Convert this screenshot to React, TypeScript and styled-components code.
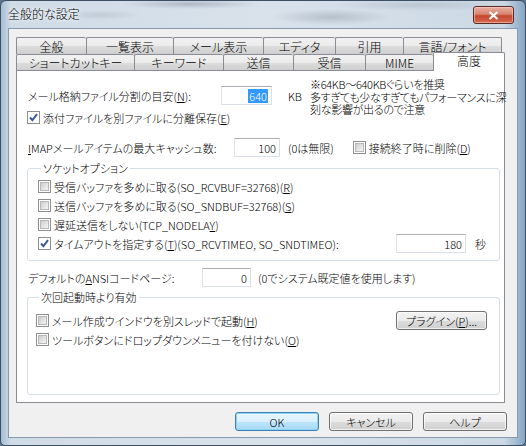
import React from "react";
import styled, { createGlobalStyle, css } from "styled-components";

const GlobalStyle = createGlobalStyle`
    html, body {
        margin: 0;
        padding: 0;
    }
    body {
        width: 526px;
        height: 446px;
        overflow: hidden;
        background: #5d7288;
        font-family: "Noto Sans CJK JP", sans-serif;
        font-size: 11px;
        font-weight: 300;
        font-feature-settings: "palt";
        color: #000;
    }
`;

const Window = styled.div`
    width: 526px;
    height: 446px;
    box-sizing: border-box;
    display: flex;
    flex-direction: column;
    border: 1px solid #3e4f61;
    border-radius: 6px 6px 5px 5px;
    overflow: hidden;
    background:
        radial-gradient(ellipse 60px 8px at 330px 16px, rgba(110, 120, 135, 0.3), transparent),
        radial-gradient(ellipse 70px 5px at 190px 3px, rgba(90, 100, 115, 0.3), transparent),
        radial-gradient(ellipse 40px 5px at 100px 14px, rgba(120, 130, 140, 0.2), transparent),
        radial-gradient(ellipse 90px 6px at 420px 4px, rgba(100, 110, 125, 0.2), transparent),
        linear-gradient(90deg, #a6bdd3 0px, #cfdbe6 10px, #d9e2eb 50%, #ccd9e5 96%, #86a5c4 100%);
`;

const TitleBar = styled.div`
    height: 27px;
    flex: none;
    display: flex;
    align-items: flex-start;
    justify-content: space-between;
    padding: 0 11px 0 7px;
`;

const TitleText = styled.span`
    margin-top: 6px;
    font-size: 12px;
    line-height: 14px;
    text-shadow: 0 0 6px #fff, 0 0 3px #fff;
`;

const CloseButton = styled.div`
    margin-top: 5px;
    width: 39px;
    height: 16px;
    border: 1px solid #5a2a26;
    border-radius: 3px;
    display: flex;
    align-items: center;
    justify-content: center;
    background: linear-gradient(180deg, #eab0a3 0%, #d98470 45%, #c4472f 55%, #d86a4f 100%);
    box-shadow: inset 0 0 0 1px rgba(255, 220, 210, 0.5);
`;

const Client = styled.div`
    flex: 1;
    margin: 0 7px 7px 7px;
    border: 1px solid #8699ad;
    background: #f0f0f0;
    display: flex;
    flex-direction: column;
    padding: 8px 10px 0 7px;
`;

const TabStrip = styled.div`
    display: flex;
    flex-direction: column;
`;

const TabRow = styled.div<{ $h: number }>`
    display: flex;
    align-items: flex-end;
    height: ${(p) => p.$h}px;
`;

const Tab = styled.div<{ $w: number; $active?: boolean }>`
    width: ${(p) => p.$w}px;
    height: 100%;
    box-sizing: border-box;
    flex: none;
    display: flex;
    align-items: center;
    justify-content: center;
    border: 1px solid #898c95;
    border-bottom: none;
    border-right: none;
    border-radius: 2px 2px 0 0;
    font-size: 12px;
    line-height: 14px;
    padding-top: 1px;
    background: linear-gradient(180deg, #f2f2f2 0%, #ebebeb 50%, #dddddd 51%, #cfcfcf 100%);
    &:last-child {
        border-right: 1px solid #898c95;
    }
    ${(p) =>
        p.$active &&
        css`
            position: relative;
            z-index: 1;
            height: 19px;
            margin-bottom: -1px;
            background: #fff;
            border-right: 1px solid #898c95;
            padding-top: 0;
            padding-bottom: 3px;
        `}
`;

const Panel = styled.div`
    width: 489px;
    height: 333px;
    box-sizing: border-box;
    border: 1px solid #898c95;
    background: #fff;
    padding: 8px 4px 0 10px;
    display: flex;
    flex-direction: column;
`;

const TopSection = styled.div`
    display: flex;
    height: 45px;
`;

const LeftCol = styled.div`
    width: 283px;
    flex: none;
    padding-top: 7px;
    display: flex;
    flex-direction: column;
    gap: 6px;
`;

const Note = styled.div`
    line-height: 12.5px;
    white-space: nowrap;
    letter-spacing: -0.3px;
    margin-top: -1px;
`;

const Row = styled.div<{ $mt?: number; $h?: number }>`
    display: flex;
    align-items: center;
    height: ${(p) => p.$h ?? 19}px;
    margin-top: ${(p) => p.$mt ?? 0}px;
    white-space: nowrap;
`;

const Label = styled.span<{ $w?: number }>`
    ${(p) => p.$w && `width: ${p.$w}px; flex: none;`}
    padding-left: 1px;
`;

const Field = styled.div<{ $w: number; $ml?: number; $auto?: boolean }>`
    width: ${(p) => p.$w}px;
    height: 19px;
    box-sizing: border-box;
    flex: none;
    border: 1px solid #dbdfe6;
    border-top-color: #abadb3;
    border-left-color: #e2e3ea;
    background: #fff;
    display: flex;
    align-items: center;
    justify-content: flex-end;
    padding-right: 3px;
    margin-left: ${(p) => (p.$auto ? "auto" : `${p.$ml ?? 0}px`)};
`;

const Selected = styled.span`
    background: #3399ff;
    color: #fff;
    line-height: 14px;
    padding: 0 1px;
`;

const Unit = styled.span<{ $ml: number; $mr?: number }>`
    margin-left: ${(p) => p.$ml}px;
    margin-right: ${(p) => p.$mr ?? 0}px;
`;

const CheckWrap = styled.label<{ $ml?: number }>`
    display: flex;
    align-items: center;
    gap: 3px;
    margin-left: ${(p) => p.$ml ?? 0}px;
    white-space: nowrap;
`;

const Box = styled.span<{ $checked?: boolean }>`
    width: 13px;
    height: 13px;
    box-sizing: border-box;
    flex: none;
    border: 1px solid #8e8f8f;
    background: #fff;
    display: flex;
    align-items: center;
    justify-content: center;
    &::before {
        content: "";
        display: ${(p) => (p.$checked ? "none" : "block")};
        width: 9px;
        height: 9px;
        box-sizing: border-box;
        border: 1px solid #b8b8b8;
        background: linear-gradient(135deg, #cbcbcb 0%, #e6e6e6 60%, #f4f4f4 100%);
    }
`;

const GroupBox = styled.fieldset<{ $mt: number; $h?: number; $pl: number }>`
    margin: ${(p) => p.$mt}px 0 0 0;
    width: 473px;
    ${(p) => p.$h && `height: ${p.$h}px;`}
    box-sizing: border-box;
    border: 1px solid #d5dfe5;
    border-radius: 3px;
    padding: 2px 12px 7px ${(p) => p.$pl}px;
    min-width: 0;
`;

const Legend = styled.legend`
    padding: 0 2px;
    margin-left: 3px;
    line-height: 14px;
`;

const PushButton = styled.div<{ $w: number; $default?: boolean; $auto?: boolean }>`
    width: ${(p) => p.$w}px;
    height: 19px;
    box-sizing: border-box;
    flex: none;
    border: 1px solid #707070;
    border-radius: 3px;
    display: flex;
    align-items: center;
    justify-content: center;
    background: linear-gradient(180deg, #f2f2f2 0%, #ebebeb 50%, #dddddd 51%, #cfcfcf 100%);
    box-shadow: inset 0 0 0 1px rgba(255, 255, 255, 0.7);
    line-height: 14px;
    ${(p) => p.$auto && "margin-left: auto;"}
    ${(p) =>
        p.$default &&
        css`
            border-color: #3c7fb1;
            background: linear-gradient(180deg, #eaf6fd 0%, #d9f0fc 50%, #bee6fd 51%, #a7d9f5 100%);
            box-shadow: inset 0 0 0 1px #8fd4f7;
        `}
`;

const ButtonBar = styled.div`
    display: flex;
    justify-content: flex-end;
    gap: 10px;
    margin-top: 9px;
`;

const Check = ({ checked, children, ml }: { checked?: boolean; children: React.ReactNode; ml?: number }) => (
    <CheckWrap $ml={ml}>
        <Box $checked={checked}>
            {checked && (
                <svg width="11" height="11" viewBox="0 0 11 11">
                    <path d="M2 5.5 L4.4 8.2 L9 2.2" fill="none" stroke="#3b5a96" strokeWidth="1.9" />
                </svg>
            )}
        </Box>
        <span>{children}</span>
    </CheckWrap>
);

const row1 = [
    { label: "全般", w: 70 },
    { label: "一覧表示", w: 87 },
    { label: "メール表示", w: 90 },
    { label: "エディタ", w: 72 },
    { label: "引用", w: 68 },
    { label: "言語/フォント", w: 99 },
];

const row2 = [
    { label: "ショートカットキー", w: 118 },
    { label: "キーワード", w: 89 },
    { label: "送信", w: 70 },
    { label: "受信", w: 72 },
    { label: "MIME", w: 68 },
    { label: "高度", w: 72, active: true },
];

const App = () => {
    return (
        <>
            <GlobalStyle />
            <Window>
                <TitleBar>
                    <TitleText>全般的な設定</TitleText>
                    <CloseButton>
                        <svg width="11" height="9" viewBox="0 0 11 9">
                            <path d="M1.5 1 L9.5 8 M9.5 1 L1.5 8" stroke="#fff" strokeWidth="2.2" />
                        </svg>
                    </CloseButton>
                </TitleBar>
                <Client>
                    <TabStrip>
                        <TabRow $h={17}>
                            {row1.map((t) => (
                                <Tab key={t.label} $w={t.w}>
                                    {t.label}
                                </Tab>
                            ))}
                        </TabRow>
                        <TabRow $h={16}>
                            {row2.map((t) => (
                                <Tab key={t.label} $w={t.w} $active={t.active}>
                                    {t.label}
                                </Tab>
                            ))}
                        </TabRow>
                    </TabStrip>
                    <Panel>
                        <TopSection>
                            <LeftCol>
                                <Row>
                                    <Label $w={193}>
                                        メール格納ファイル分割の目安(<u>N</u>):
                                    </Label>
                                    <Field $w={51}>
                                        <Selected>640</Selected>
                                    </Field>
                                    <Unit $ml={16}>KB</Unit>
                                </Row>
                                <Row $h={13}>
                                    <Check checked>
                                        添付ファイルを別ファイルに分離保存(<u>E</u>)
                                    </Check>
                                </Row>
                            </LeftCol>
                            <Note>
                                ※64KB～640KBぐらいを推奨
                                <br />
                                多すぎても少なすぎてもパフォーマンスに深
                                <br />
                                刻な影響が出るので注意
                            </Note>
                        </TopSection>
                        <Row $mt={14}>
                            <Label $w={206}>
                                <u>I</u>MAPメールアイテムの最大キャッシュ数:
                            </Label>
                            <Field $w={46}>100</Field>
                            <Unit $ml={8}>(0は無限)</Unit>
                            <Check ml={19}>
                                接続終了時に削除(<u>D</u>)
                            </Check>
                        </Row>
                        <GroupBox $mt={4} $pl={10}>
                            <Legend>ソケットオプション</Legend>
                            <Row>
                                <Check>
                                    受信バッファを多めに取る(SO_RCVBUF=32768)(<u>R</u>)
                                </Check>
                            </Row>
                            <Row>
                                <Check>
                                    送信バッファを多めに取る(SO_SNDBUF=32768)(<u>S</u>)
                                </Check>
                            </Row>
                            <Row>
                                <Check>
                                    遅延送信をしない(TCP_NODELA<u>Y</u>)
                                </Check>
                            </Row>
                            <Row>
                                <Check checked>
                                    タイムアウトを指定する(<u>T</u>)(SO_RCVTIMEO, SO_SNDTIMEO):
                                </Check>
                                <Field $w={70} $auto>
                                    180
                                </Field>
                                <Unit $ml={9} $mr={1}>
                                    秒
                                </Unit>
                            </Row>
                        </GroupBox>
                        <Row $mt={7}>
                            <Label $w={174}>
                                デフォルトの<u>A</u>NSIコードページ:
                            </Label>
                            <Field $w={49}>0</Field>
                            <Unit $ml={7}>(0でシステム既定値を使用します)</Unit>
                        </Row>
                        <GroupBox $mt={3} $h={105} $pl={8}>
                            <Legend>次回起動時より有効</Legend>
                            <Row $mt={5}>
                                <Check>
                                    メール作成ウインドウを別スレッドで起動(<u>H</u>)
                                </Check>
                                <PushButton $w={91} $auto>
                                    プラグイン(<u>P</u>)...
                                </PushButton>
                            </Row>
                            <Row>
                                <Check>
                                    ツールボタンにドロップダウンメニューを付けない(<u>O</u>)
                                </Check>
                            </Row>
                        </GroupBox>
                    </Panel>
                    <ButtonBar>
                        <PushButton $w={84} $default>
                            OK
                        </PushButton>
                        <PushButton $w={84}>キャンセル</PushButton>
                        <PushButton $w={84}>ヘルプ</PushButton>
                    </ButtonBar>
                </Client>
            </Window>
        </>
    );
};

export default App;
